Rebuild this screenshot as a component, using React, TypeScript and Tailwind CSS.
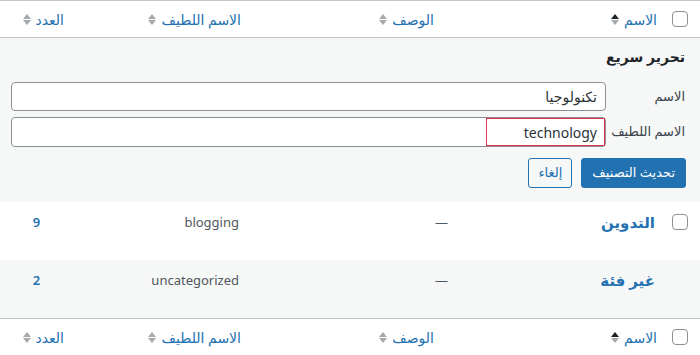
import React from "react";

const Sort = ({ active = false }: { active?: boolean }) => (
  <span className="inline-flex flex-col items-center gap-[1px] mr-[5px]">
    <svg width="8" height="5" viewBox="0 0 8 5">
      <path d="M4 0 L8 5 L0 5 Z" fill={active ? "#1d2327" : "#a7aaad"} />
    </svg>
    <svg width="8" height="5" viewBox="0 0 8 5">
      <path d="M0 0 L8 0 L4 5 Z" fill="#a7aaad" />
    </svg>
  </span>
);

const Check = () => (
  <span className="block w-4 h-4 rounded-[4px] border border-[#8c8f94] bg-white" />
);

const HeadRow = ({ top }: { top?: boolean }) => (
  <div
    className={
      "grid grid-cols-[38px_210px_202px_175px_75px] items-center bg-white text-[14px] text-[#2271b1] " +
      (top ? "h-[38px] border-t border-b border-[#c3c4c7]" : "h-[37px] border-t border-[#c3c4c7]")
    }
  >
    <div className="pr-[12px]">
      <Check />
    </div>
    <div className="pr-[5px] flex items-center">
      الاسم <Sort active />
    </div>
    <div className="pr-[18px] flex items-center">
      الوصف <Sort />
    </div>
    <div className="pr-[9px] flex items-center">
      الاسم اللطيف <Sort />
    </div>
    <div className="pr-[11px] flex items-center">
      العدد <Sort />
    </div>
  </div>
);

const Row = ({ name, slug, count, alt }: { name: string; slug: string; count: string; alt?: boolean }) => (
  <div
    className={
      "grid grid-cols-[38px_210px_202px_175px_75px] h-[58px] items-start pt-[10px] text-[13px] " +
      (alt ? "bg-[#f6f7f7]" : "bg-white")
    }
  >
    <div className="pr-[12px] pt-[2px]">{!alt && <Check />}</div>
    <div className="pr-[7px] font-bold text-[15px] text-[#2271b1] leading-[20px]">{name}</div>
    <div className="pr-[4px] text-[#50575e] leading-[20px]">—</div>
    <div className="pr-[11px] text-[#50575e] leading-[20px]" dir="ltr" style={{ textAlign: "right" }}>
      {slug}
    </div>
    <div className="text-center pr-[2px] font-semibold text-[#2271b1] leading-[20px]">{count}</div>
  </div>
);

export default function App() {
  return (
    <div dir="rtl" className="w-[700px] h-[355px] overflow-hidden bg-white font-['Noto_Sans','DejaVu_Sans',sans-serif]">
      <HeadRow top />
      <div className="bg-[#f6f7f7] h-[164px] pr-[15px] pt-[10px]">
        <div className="font-bold text-[14px] text-[#1d2327] leading-[18px]">تحرير سريع</div>
        <div className="mt-[16px] flex items-center">
          <label className="w-[79px] text-[13px] text-[#3c434a]">الاسم</label>
          <div className="w-[595px] h-[29px] rounded-[4px] border border-[#8c8f94] bg-white flex items-center pr-[8px] text-[14px] text-[#2c3338]">
            تكنولوجيا
          </div>
        </div>
        <div className="mt-[6px] flex items-center">
          <label className="w-[79px] text-[13px] text-[#3c434a]">الاسم اللطيف</label>
          <div className="relative w-[595px] h-[30px] rounded-[4px] border border-[#8c8f94] bg-white flex items-center pr-[8px] text-[14px] text-[#2c3338]">
            <span dir="ltr">technology</span>
            <span className="absolute right-0 top-0 h-[28px] w-[119px] border border-[#e0354a]" />
          </div>
        </div>
        <div className="mt-[11px] mr-[-1px] flex items-center gap-[9px]">
          <button className="h-[30px] px-[10px] rounded-[3px] bg-[#2271b1] text-white text-[13px] border border-[#2271b1]">
            تحديث التصنيف
          </button>
          <button className="h-[30px] px-[9px] rounded-[3px] bg-[#f6f7f7] text-[#2271b1] text-[13px] border border-[#2271b1]">
            إلغاء
          </button>
        </div>
      </div>
      <Row name="التدوين" slug="blogging" count="9" />
      <Row name="غير فئة" slug="uncategorized" count="2" alt />
      <HeadRow />
    </div>
  );
}
